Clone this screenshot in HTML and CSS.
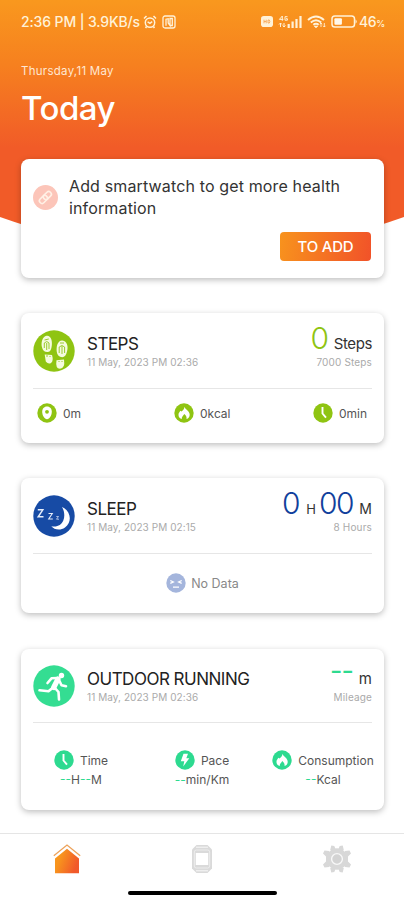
FILE: index.html
```html
<!DOCTYPE html>
<html lang="en">
<head>
<meta charset="utf-8">
<title>Today</title>
<link rel="stylesheet" href="styles.css">
</head>
<body>
<svg width="0" height="0" class="defs">
  <defs>
    <linearGradient id="warm" x1="0" y1="0" x2="1" y2="0.4"><stop offset="0.3" stop-color="#f8951d"/><stop offset="1" stop-color="#f1592a"/></linearGradient>
    <symbol id="clock" viewBox="0 0 20 20"><circle cx="10" cy="10" r="9.7" fill="currentColor"/><path d="M9.5 4V10.5L13 14.6" fill="none" stroke="#fff" stroke-width="1.9"/></symbol>
    <symbol id="flame" viewBox="0 0 20 20"><circle cx="10" cy="10" r="9.7" fill="currentColor"/><path d="M10.4 3.8C10.8 6 15.7 8 15.7 11.7C15.7 14 14.4 15.6 12.5 16C12.9 14 12 12.3 10.2 11C9.8 12.5 7.4 13.6 7.9 16C5.8 15.6 4.3 14 4.5 11.6C4.6 9.8 5.8 9 6.4 7.8L7.5 8.5C9.2 7.5 10.4 6 10.4 3.8Z" fill="#fff"/></symbol>
    <symbol id="pin" viewBox="0 0 20 20"><circle cx="10" cy="10" r="9.7" fill="currentColor"/><path d="M10 3.6C6.9 3.6 5.2 6.1 5.2 8.8C5.2 12.3 7.5 16.3 10 16.3S14.8 12.3 14.8 8.8C14.8 6.1 13.1 3.6 10 3.6Z" fill="#fff"/><circle cx="10" cy="8.8" r="1.9" fill="currentColor"/></symbol>
    <symbol id="bolt" viewBox="0 0 20 20"><circle cx="10" cy="10" r="9.7" fill="currentColor"/><path d="M8.5 3.8H13L11.3 8.3H14.3L8.2 16.5L9.3 11.3H5.8Z" fill="#fff"/></symbol>
  </defs>
</svg>
<div class="phone">
  <header class="hero">
    <div class="status">
      <span class="status-time">2:36 PM | 3.9KB/s</span>
      <svg class="alarm" width="14" height="14" viewBox="0 0 14 14" fill="none" stroke="#fff2d8" stroke-width="1.5"><circle cx="7" cy="7.6" r="4.7"/><path d="M1 3.5L3.5 1M13 3.5L10.5 1M4.6 6.8L7 8.3L9.2 6.7M3.5 11.5L2.6 13M10.5 11.5L11.4 13"/></svg>
      <svg class="nfc" width="14" height="14" viewBox="0 0 14 14" fill="none" stroke="#fff2d8" stroke-width="1.3"><rect x="1" y="1" width="12" height="12" rx="2"/><path d="M4 10.8V4.2L6.2 3.7V8L8 10.5V3.5H10.3V10.5H8.5"/></svg>
      <svg class="hd" width="12" height="12" viewBox="0 0 12 12"><rect width="12" height="11" rx="2.8" fill="#fff2d8"/><path d="M3 3.7V7.3M3 5.5H5.2M5.2 3.7V7.3M7 4V7H8.3Q9.4 5.5 8.3 4Z" fill="none" stroke="#f6a04a" stroke-width=".8"/></svg>
      <svg class="signal" width="25" height="14" viewBox="0 0 25 14" fill="none" stroke="#fff2d8"><path d="M5.3 5.8V1L2.4 4.4H6.4M10.5 1.7H8V5.2H10.4V3.7H9M3.5 8V12M2 9.5L3.5 8L5 9.5M7 8V12M5.7 10.5L7 12L8.4 10.5" stroke-width="1"/><path d="M11.7 13V9M15.6 13V6.5M19.5 13V4M23.5 13V1" stroke-width="2.2"/></svg>
      <svg class="wifi" width="20" height="14" viewBox="0 0 20 14" fill="none" stroke="#fff2d8" stroke-width="1.9"><path d="M1 5Q9 -2 17 5M3.8 7.5Q9 3 14.2 7.5M6.3 9.8Q9 7.6 11.7 9.8"/><path d="M7 11L9 13L11 11Z" fill="#fff2d8" stroke-width=".5"/><path d="M14 8V12M12.8 9.2L14 8L15.2 9.2M17.3 8V12M16.1 10.8L17.3 12L18.5 10.8" stroke-width=".9"/></svg>
      <svg class="battery" width="27" height="13" viewBox="0 0 27 13"><rect x="1" y="1" width="22.5" height="11" rx="2.8" fill="none" stroke="#fff2d8" stroke-width="1.5"/><rect x="3.4" y="3.2" width="7.5" height="6.6" rx="1" fill="#fff8ea"/><path d="M24.5 4.2Q27 6.5 24.5 8.8Z" fill="#fff2d8"/></svg>
      <span class="status-pct">46<small>%</small></span>
    </div>
    <p class="date">Thursday,11 May</p>
    <h1>Today</h1>
  </header>

  <main>
    <section class="card add">
      <div class="add-row">
        <svg width="25" height="25" viewBox="0 0 25 25"><circle cx="12.5" cy="12.5" r="12.5" fill="#fcc5b9"/><g transform="rotate(-45 12.5 12.5)" fill="none" stroke="#fff1e6" stroke-width="1.6"><rect x="5.2" y="9.8" width="9" height="5.2" rx="2.4"/><rect x="10.7" y="9.8" width="9" height="5.2" rx="2.4"/></g></svg>
        <p><span class="add-l1">Add smartwatch to get more health</span><br><span class="add-l2">information</span></p>
      </div>
      <button><span>TO ADD</span></button>
    </section>

    <section class="card steps">
      <div class="head">
        <svg class="badge" viewBox="0 0 42 42"><circle cx="21" cy="21" r="20.7" fill="#8fc412"/><g fill="#f5fbdf"><path d="M13.5 5.7C18 5 19.5 11 18.8 15.5Q18.3 21.5 15 22Q10.5 22.5 9.2 18C7.5 12.5 9.5 6.5 13.5 5.7Z"/><path d="M11.7 24.5L19 25Q20.8 31 18 33Q15.3 34.7 12.8 31.5Z"/><path d="M29.5 10.5C34 11 35.5 16.5 34 21.5Q32.8 27 29.2 27.2Q24.5 27 23.8 22C23 16 25 10 29.5 10.5Z"/><path d="M23.5 30.3L31 29.5Q32.3 38.7 27 38.7Q22.2 38.8 23.5 30.3Z"/></g><path d="M11.5 10L15.8 9M11.3 18V13Q14 10 16 13V19M13.7 13V20M26.2 23V17Q29 14 31.6 17V23M29 16V24M27 13H31M14 25V27M17 26V27M26 31V32M29 31V32" fill="none" stroke="#9bcc2e" stroke-width="1"/></svg>
        <div class="label"><h2>STEPS</h2><p>11 May, 2023 PM 02:36</p></div>
        <div class="value"><div class="amount"><b>0</b><span class="u-steps">Steps</span></div><p class="goal g-steps">7000 Steps</p></div>
      </div>
      <div class="stats">
        <div><svg><use href="#pin"/></svg><span>0m</span></div>
        <div><svg><use href="#flame"/></svg><span>0kcal</span></div>
        <div><svg><use href="#clock"/></svg><span>0min</span></div>
      </div>
    </section>

    <section class="card sleep">
      <div class="head">
        <svg class="badge" viewBox="0 0 42 42"><circle cx="21" cy="21" r="20.7" fill="#174ba5"/><path d="M29 12C38 16 39.5 27 32 32.5C27 36 21 34.5 18.3 31.2C24 32.5 28.5 30 30.3 25.5C32 21.5 31.5 16 29 12Z" fill="#fff"/><g fill="none" stroke="#e6edfa"><path d="M4.8 14.8H9.8L5.2 21.8H10.5" stroke-width="1.5"/><path d="M15.5 18.5H19.3L15.7 24H19.8" stroke-width="1.1"/><path d="M23.3 21.5H25.5L23.5 24.2H26" stroke-width=".7"/></g></svg>
        <div class="label"><h2>SLEEP</h2><p>11 May, 2023 PM 02:15</p></div>
        <div class="value"><div class="amount"><b>0</b><span class="u-h">H</span><b>00</b><span class="u-m">M</span></div><p class="goal g-hours">8 Hours</p></div>
      </div>
      <div class="empty"><svg viewBox="0 0 20 20"><circle cx="10" cy="10" r="9.7" fill="#a4b5dc"/><path d="M4.3 7.5L7.3 9L4.3 10.3M15.7 7.5L12.7 9L15.7 10.3M7 14.2H13" fill="none" stroke="#fff" stroke-width="1.3"/></svg><span>No Data</span></div>
    </section>

    <section class="card running">
      <div class="head">
        <svg class="badge" viewBox="0 0 42 42"><circle cx="21" cy="21" r="20.7" fill="#34dd92"/><circle cx="28.5" cy="10.5" r="2.7" fill="#fff"/><path d="M25 14L20.7 22.5" stroke="#fff" stroke-width="5.3" stroke-linecap="round"/><path d="M24.5 13L18.5 13.3L14.5 18M26.5 16L28.5 20.3L33 21.3M19.5 23L15.5 26.3L6.5 25.3M21.5 22.5L25.5 27L26 34.5" fill="none" stroke="#fff" stroke-width="2.6" stroke-linecap="round" stroke-linejoin="round"/></svg>
        <div class="label"><h2>OUTDOOR RUNNING</h2><p>11 May, 2023 PM 02:36</p></div>
        <div class="value"><div class="amount"><b>--</b><span class="u-dist">m</span></div><p class="goal g-mile">Mileage</p></div>
      </div>
      <div class="metrics">
        <div class="m-time"><div><svg><use href="#clock"/></svg><span>Time</span></div><p><i>--</i>H<i>--</i>M</p></div>
        <div class="m-pace"><div><svg><use href="#bolt"/></svg><span>Pace</span></div><p><i>--</i>min/Km</p></div>
        <div class="m-cons"><div><svg><use href="#flame"/></svg><span>Consumption</span></div><p><i>--</i>Kcal</p></div>
      </div>
    </section>
  </main>

  <nav>
    <div class="tabs">
      <svg width="28" height="30" viewBox="0 0 28 30"><path d="M2 14.5L14 4.8L26 14.5V29.3H2Z" fill="url(#warm)"/><path d="M.8 12.3L14 1.3L27.2 12.3" fill="none" stroke="#fff" stroke-width="3.4"/><path d="M.8 11.8L14 1L27.2 11.8" fill="none" stroke="#eda25a" stroke-width="1.3"/></svg>
      <svg class="watch" width="24" height="30" viewBox="0 0 24 30"><path d="M6.5 1H17.5L22 5.5V24.5L17.5 29H6.5L2 24.5V5.5Z" fill="#dadada"/><path d="M6 3.2H18M6 26.8H18" stroke="#f8f8f8" stroke-width="1"/><rect x="4.3" y="6" width="15.4" height="18" rx="2" fill="none" stroke="#f4f4f4" stroke-width=".7"/><rect x="5.8" y="9" width="12.4" height="12" fill="#fff"/></svg>
      <svg class="gear" width="28" height="28" viewBox="-14 -14 28 28"><g fill="#d8d8d8"><circle r="10.7"/><path d="M-6.8 -9L-5.7 -13.4L-2.7 -13L-1.5 -10H1.5L2.7 -13L5.7 -13.4L6.8 -9Z"/><path d="M-6.8 9L-5.7 13.4L-2.7 13L-1.5 10H1.5L2.7 13L5.7 13.4L6.8 9Z"/><path d="M-8 -8L-12.5 -8.5L-14 -5.5L-11 -2.5V2.5L-14 5.5L-12.5 8.5L-8 8Z"/><path d="M8 -8L12.5 -8.5L14 -5.5L11 -2.5V2.5L14 5.5L12.5 8.5L8 8Z"/></g><circle r="5.4" fill="#d3d3d3" stroke="#f8f8f8" stroke-width="1.4"/></svg>
    </div>
    <div class="handle"></div>
  </nav>
</div>
</body>
</html>
```
FILE: styles.css
```css
* { box-sizing: border-box; margin: 0; padding: 0; }
body { width: 404px; height: 900px; overflow: hidden; background: #fff; font-family: Inter, Roboto, sans-serif; color: #222; }
.phone { height: 900px; display: flex; flex-direction: column; }
svg { display: block; flex: none; }
span, p, h1, h2, b { white-space: nowrap; }
.defs { position: absolute; }

.hero { height: 252px; flex: none; padding: 14px 20px 0 21px; color: #fff; background: linear-gradient(#f9981e 0, #f6801f 65px, #f15b28 148px, #f15b28 100%); clip-path: ellipse(600px 600px at 50% -348px); }
.status { height: 15px; display: flex; align-items: center; color: #fff2d8; font-size: 14px; font-weight: 500; }
.status-time { width: 122px; letter-spacing: -.13px; }
.nfc { margin-left: 5px; }
.hd { margin-left: auto; }
.signal { margin-left: 4px; }
.wifi { margin-left: 5px; }
.battery { margin-left: 4px; }
.status-pct { width: 25px; margin-left: 1px; letter-spacing: -.4px; }
.status-pct small { font-size: 9px; }
.date { margin-top: 34px; font-size: 11.5px; line-height: 17px; letter-spacing: .27px; color: #ffe7d2; }
h1 { margin-top: 7px; font-size: 33px; line-height: 43px; font-weight: 500; letter-spacing: -.5px; }

main { margin: -93px 20px 0 21px; flex: 1; position: relative; }
.card { border-radius: 8px; background: #fff; box-shadow: 0 2px 6px rgba(0,0,0,.26); padding: 0 12px; }
.add { height: 119px; padding-top: 17px; }
.add-row { display: flex; gap: 11px; color: #333; font-size: 16px; line-height: 21.5px; letter-spacing: .14px; }
.add-row svg { margin-top: 9px; }
button { display: block; margin: 13px 1px 0 auto; width: 91px; height: 29px; border: 0; border-radius: 4px; background: linear-gradient(100deg, #f8931d, #f15229); color: #fff; font: 500 15px Inter, sans-serif; letter-spacing: -.2px; }
.steps { height: 130px; margin-top: 35px; --tone: #8fc412; }
.sleep { height: 135px; margin-top: 35px; --tone: #123f9c; }
.running { height: 161px; margin-top: 36px; --tone: #2dda90; }
.head { height: 76px; display: flex; border-bottom: 1px solid #e6e6e6; padding-top: 17px; }
.running .head { height: 74px; padding-top: 16px; }
.badge { width: 42px; height: 42px; }
.label { margin-left: 12px; padding-top: 4px; flex: 1; }
h2 { font-size: 17px; line-height: 20px; font-weight: 400; letter-spacing: -.5px; }
.label p, .goal { font-size: 10px; line-height: 12px; color: #aaa; letter-spacing: .07px; }
.label p { margin-top: 2px; }
.value { display: flex; flex-direction: column; align-items: flex-end; }
.amount { height: 24px; margin-top: -4px; display: flex; align-items: baseline; line-height: 24px; color: #333; }
.amount b { font-size: 30px; font-weight: 300; letter-spacing: -1.3px; color: var(--tone); }
.goal { margin-top: 6px; letter-spacing: .15px; }
.u-steps { margin-left: 6px; font-size: 15px; letter-spacing: -.4px; }
.u-h { margin: 0 3px 0 7px; font-size: 13px; }
.u-m { margin-left: 6px; font-size: 14px; }
.u-dist { margin-left: 6px; font-size: 15px; }
.running .amount { align-items: flex-end; margin-top: 0; }
.running .goal { margin-top: 2px; }
.running .amount b { line-height: 20px; margin-bottom: 8px; font-size: 27px; font-weight: 400; letter-spacing: -1px; }
.running .amount span { line-height: 20px; }
.stats, .metrics { color: #555; font-size: 12px; }
.stats { display: grid; grid-template-columns: 137px 139px auto; padding: 14px 0 0 4px; }
.stats div { display: flex; align-items: center; gap: 6px; }
.stats svg, .metrics svg, .empty svg { width: 20px; height: 20px; color: var(--tone); }
.empty { display: flex; justify-content: center; align-items: center; gap: 5px; padding-top: 19px; font-size: 12.5px; color: #888; }
.metrics { display: flex; margin: 27px -3px 0 21px; }
.metrics > div { display: flex; flex-direction: column; align-items: center; }
.metrics div div { display: flex; align-items: center; gap: 6px; height: 20px; }
.metrics p { line-height: 20px; }
.metrics i { font-style: normal; color: var(--tone); }
.m-time { width: 54px; }
.m-pace { margin-left: 67px; width: 54px; }
.m-cons { margin-left: 43px; width: 102px; }

nav { height: 67px; flex: none; border-top: 1px solid #e5e5e5; background: #fff; position: relative; }
.tabs { display: flex; justify-content: space-around; align-items: center; height: 50px; }
.watch { margin-left: 2px; }
.gear { margin-left: 2px; }
.handle { width: 149px; height: 4px; margin: 7px auto 0; border-radius: 2px; background: #000; }
```
